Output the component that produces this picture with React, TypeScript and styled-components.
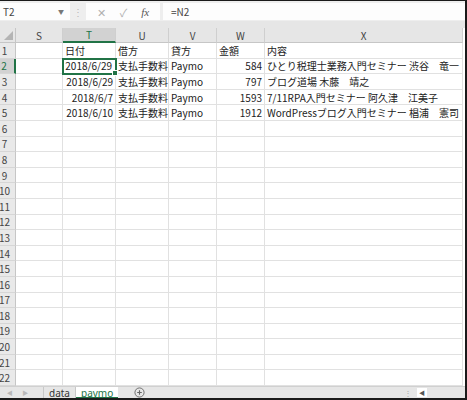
import React from 'react';
import styled, { createGlobalStyle } from 'styled-components';

const GlobalStyle = createGlobalStyle`
  body {
    margin: 0;
    background: #ffffff;
  }
`;

const FONT = `'Noto Sans CJK JP', 'Noto Sans', sans-serif`;
const GREEN = '#217346';
const ROW_H = 15.6;

const columns = [
  { key: 'S', width: 47 },
  { key: 'T', width: 53 },
  { key: 'U', width: 53 },
  { key: 'V', width: 48 },
  { key: 'W', width: 48 },
  { key: 'X', width: 198 },
];

type Cell = { text: string; align?: 'left' | 'right' };

const data: Record<number, Record<string, Cell>> = {
  1: {
    T: { text: '日付' },
    U: { text: '借方' },
    V: { text: '貸方' },
    W: { text: '金額' },
    X: { text: '内容' },
  },
  2: {
    T: { text: '2018/6/29', align: 'right' },
    U: { text: '支払手数料' },
    V: { text: 'Paymo' },
    W: { text: '584', align: 'right' },
    X: { text: 'ひとり税理士業務入門セミナー 渋谷　竜一' },
  },
  3: {
    T: { text: '2018/6/29', align: 'right' },
    U: { text: '支払手数料' },
    V: { text: 'Paymo' },
    W: { text: '797', align: 'right' },
    X: { text: 'ブログ道場 木藤　靖之' },
  },
  4: {
    T: { text: '2018/6/7', align: 'right' },
    U: { text: '支払手数料' },
    V: { text: 'Paymo' },
    W: { text: '1593', align: 'right' },
    X: { text: '7/11RPA入門セミナー 阿久津　江美子' },
  },
  5: {
    T: { text: '2018/6/10', align: 'right' },
    U: { text: '支払手数料' },
    V: { text: 'Paymo' },
    W: { text: '1912', align: 'right' },
    X: { text: 'WordPressブログ入門セミナー 椙浦　憲司' },
  },
};

const rows = Array.from({ length: 22 }, (_, i) => i + 1);

const Frame = styled.div`
  width: 467px;
  height: 400px;
  box-sizing: border-box;
  border-top: 1px solid #1a1a1a;
  border-right: 2px solid #1a1a1a;
  border-bottom: 2px solid #1a1a1a;
  background: #e6e6e6;
  display: flex;
  flex-direction: column;
  overflow: hidden;
  font-family: ${FONT};
  & > * {
    flex-shrink: 0;
  }
`;

const FormulaBar = styled.div`
  height: 20px;
  box-sizing: border-box;
  padding: 2px 0 1px;
  display: flex;
  align-items: stretch;
  background: #eeeeee;
`;

const NameBox = styled.div`
  width: 70px;
  background: #fdfdfd;
  display: flex;
  align-items: center;
  justify-content: space-between;
  padding: 0 6px 0 3px;
  box-sizing: border-box;
  font-size: 10px;
  color: #444;
`;

const Caret = styled.span`
  font-size: 6px;
  color: #777;
`;

const Dots = styled.div`
  width: 16px;
  display: flex;
  align-items: center;
  justify-content: center;
  color: #b8b8b8;
  font-size: 10px;
`;

const ButtonBox = styled.div`
  width: 74px;
  background: #fdfdfd;
  display: flex;
  align-items: center;
  justify-content: space-around;
  padding: 0 4px;
  box-sizing: border-box;
  color: #b0b0b0;
  font-size: 11px;
`;

const Fx = styled.span`
  font-family: 'Liberation Serif', serif;
  font-style: italic;
  color: #555;
  font-size: 11px;
`;

const FormulaInput = styled.div`
  flex: 1;
  margin-left: 3px;
  background: #fdfdfd;
  display: flex;
  align-items: center;
  padding-left: 8px;
  font-size: 10px;
  color: #444;
`;

const Gap = styled.div`
  height: 7px;
  background: #e6e6e6;
`;

const Grid = styled.div`
  display: grid;
  grid-template-columns: 16px ${columns.map((c) => `${c.width}px`).join(' ')};
  grid-template-rows: 15px repeat(22, ${ROW_H}px);
  background: #ffffff;
`;

const Corner = styled.div`
  background: #e6e6e6;
  border-right: 1px solid #c6c6c6;
  border-bottom: 1px solid #c6c6c6;
  box-sizing: border-box;
  position: relative;
  &::after {
    content: '';
    position: absolute;
    right: 2px;
    bottom: 2px;
    border-style: solid;
    border-width: 0 0 9px 9px;
    border-color: transparent transparent #b4b4b4 transparent;
  }
`;

const ColHeader = styled.div<{ $active?: boolean }>`
  background: ${({ $active }) => ($active ? '#d2d2d2' : '#e6e6e6')};
  border-right: 1px solid #cfcfcf;
  border-bottom: ${({ $active }) => ($active ? `2px solid ${GREEN}` : '1px solid #c6c6c6')};
  box-sizing: border-box;
  display: flex;
  align-items: center;
  justify-content: center;
  font-size: 10px;
  color: ${({ $active }) => ($active ? GREEN : '#444')};
`;

const RowHeader = styled.div<{ $active?: boolean }>`
  background: ${({ $active }) => ($active ? '#d2d2d2' : '#e9e9e9')};
  border-right: ${({ $active }) => ($active ? `2px solid ${GREEN}` : '1px solid #c6c6c6')};
  border-bottom: 1px solid #d6d6d6;
  box-sizing: border-box;
  display: flex;
  align-items: center;
  justify-content: center;
  padding-right: 6px;
  font-size: 10px;
  color: ${({ $active }) => ($active ? GREEN : '#444')};
  overflow: hidden;
  white-space: nowrap;
`;

const DataCell = styled.div<{ $align: 'left' | 'right'; $selected?: boolean }>`
  border-right: 1px solid #e1e1e1;
  border-bottom: 1px solid #e1e1e1;
  box-sizing: border-box;
  display: flex;
  align-items: center;
  justify-content: ${({ $align }) => ($align === 'right' ? 'flex-end' : 'flex-start')};
  padding: 0 2px;
  font-size: 10px;
  color: #222;
  white-space: nowrap;
  overflow: visible;
  position: relative;
  ${({ $selected }) =>
    $selected &&
    `
    padding-right: 3px;
    outline: 2px solid ${GREEN};
    outline-offset: -1px;
    z-index: 1;
    &::after {
      content: '';
      position: absolute;
      right: -3px;
      bottom: -3px;
      width: 4px;
      height: 4px;
      background: ${GREEN};
      border: 1px solid #fff;
    }
  `}
`;

const TabBar = styled.div`
  flex: 1 1 auto;
  min-height: 0;
  display: flex;
  align-items: stretch;
  background: #e6e6e6;
  border-top: 1px solid #d0d0d0;
  box-sizing: border-box;
  font-size: 10px;
  line-height: 10px;
`;

const NavArrows = styled.div`
  width: 43px;
  box-sizing: border-box;
  display: flex;
  align-items: center;
  justify-content: space-around;
  padding: 0 10px 0 2px;
  color: #b8b8b8;
  font-size: 6px;
`;

const Tab = styled.div<{ $active?: boolean }>`
  padding: 0 5px;
  display: flex;
  align-items: center;
  border-left: 1px solid #c8c8c8;
  background: ${({ $active }) => ($active ? '#ffffff' : 'transparent')};
  color: ${({ $active }) => ($active ? GREEN : '#333')};
  box-shadow: ${({ $active }) => ($active ? `inset 0 -1px 0 ${GREEN}` : 'none')};
  font-family: 'Noto Sans', sans-serif;
  font-size: 10px;
  line-height: 10px;
`;

const AddButton = styled.div`
  margin-left: 16px;
  display: flex;
  align-items: center;
`;

const Spacer = styled.div`
  flex: 1;
`;

const ScrollDots = styled.div`
  display: flex;
  align-items: center;
  color: #a8a8a8;
  font-size: 8px;
  padding: 0 5px;
`;

const ScrollButton = styled.div`
  width: 10px;
  margin: 1px 38px 1px 0;
  background: #ffffff;
  display: flex;
  align-items: center;
  justify-content: center;
  color: #555;
  font-size: 6px;
`;

export default function App() {
  return (
    <>
      <GlobalStyle />
      <Frame>
        <FormulaBar>
          <NameBox>
            T2
            <Caret>▼</Caret>
          </NameBox>
          <Dots>⋮</Dots>
          <ButtonBox>
            <span>✕</span>
            <span>✓</span>
            <Fx>fx</Fx>
          </ButtonBox>
          <FormulaInput>=N2</FormulaInput>
        </FormulaBar>
        <Gap />
        <Grid>
          <Corner />
          {columns.map((c) => (
            <ColHeader key={c.key} $active={c.key === 'T'}>
              {c.key}
            </ColHeader>
          ))}
          {rows.map((r) => (
            <React.Fragment key={r}>
              <RowHeader $active={r === 2}>{r}</RowHeader>
              {columns.map((c) => {
                const cell = data[r]?.[c.key];
                return (
                  <DataCell
                    key={c.key}
                    $align={cell?.align ?? 'left'}
                    $selected={r === 2 && c.key === 'T'}
                  >
                    {cell?.text}
                  </DataCell>
                );
              })}
            </React.Fragment>
          ))}
        </Grid>
        <TabBar>
          <NavArrows>
            <span>◀</span>
            <span>▶</span>
          </NavArrows>
          <Tab>data</Tab>
          <Tab $active>paymo</Tab>
          <AddButton>
            <svg width="11" height="11" viewBox="0 0 12 12">
              <circle cx="6" cy="6" r="5" fill="none" stroke="#666" strokeWidth="1" />
              <path d="M6 3.5v5M3.5 6h5" stroke="#666" strokeWidth="1.2" />
            </svg>
          </AddButton>
          <Spacer />
          <ScrollDots>⋮</ScrollDots>
          <ScrollButton>◀</ScrollButton>
        </TabBar>
      </Frame>
    </>
  );
}
